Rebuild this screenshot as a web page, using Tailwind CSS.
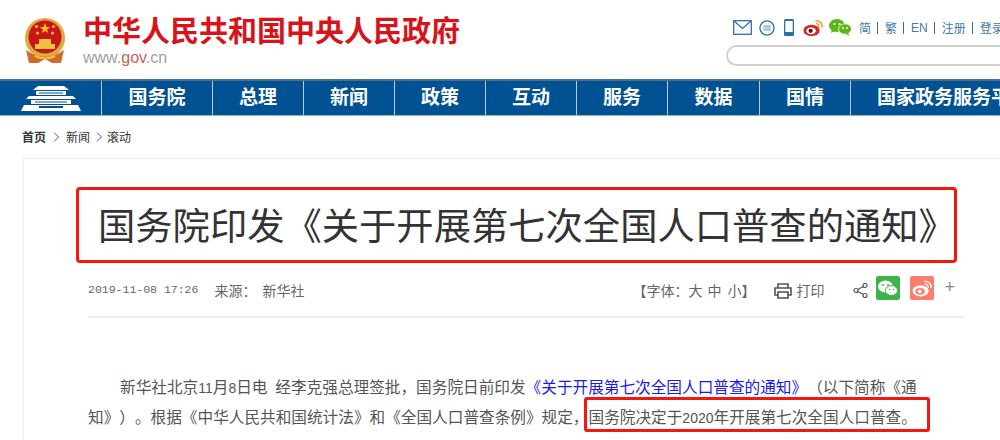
<!DOCTYPE html>
<html lang="zh-CN">
<head>
<meta charset="utf-8">
<script src="https://cdn.jsdelivr.net/npm/@tailwindcss/browser@4"></script>
</head>
<body class="w-[1000px] h-[440px] overflow-hidden bg-white font-['Noto_Sans_CJK_SC','Noto_Sans',sans-serif] [text-spacing-trim:space-all] [text-autospace:no-autospace]">
<header class="h-[79px] flex relative">
  <svg class="ml-[23px] mt-[18px] w-[44px] h-[47px] shrink-0" viewBox="0 0 44 47">
    <circle cx="22" cy="20" r="20" fill="#e0a83f"/>
    <circle cx="22" cy="19" r="16.500" fill="#c8161d"/>
    <polygon points="22,5 23.300,9 27.300,9 24,11.400 25.300,15 22,13 18.800,15 20,11.400 16.700,9 20.700,9" fill="#f5c518"/>
    <circle cx="13.500" cy="8.500" r="1.600" fill="#f5c518"/><circle cx="30.500" cy="8.500" r="1.600" fill="#f5c518"/>
    <circle cx="14.500" cy="15" r="1.600" fill="#f5c518"/><circle cx="29.500" cy="15" r="1.600" fill="#f5c518"/>
    <rect x="12" y="26" width="20" height="5" fill="#f0c040"/>
    <rect x="16" y="21" width="12" height="5" fill="#f0c040"/>
    <path d="M3 32 Q22 46 41 32 L38 45 H29 L22 41 L15 45 H6 Z" fill="#cf6a2a"/>
    <path d="M12 38 Q22 43 32 38" stroke="#f0c040" stroke-width="2" fill="none"/>
  </svg>
  <div class="ml-[16px] pt-[11px]">
    <div class="text-[29px] leading-[36px] font-bold text-[#d7141a] whitespace-nowrap">中华人民共和国中央人民政府</div>
    <div class="text-[16px] leading-[20px] mt-[1px] text-[#a0a0a0] font-['Liberation_Sans',sans-serif]">www.<span class="text-[#c9605a]">gov</span>.cn</div>
  </div>
  <div class="absolute left-[726px] top-0 w-[274px] overflow-hidden">
    <div class="flex items-center h-[45px] pt-[10px] whitespace-nowrap">
      <svg class="ml-[7px] w-[19px] h-[15px] shrink-0" viewBox="0 0 19 15" fill="none" stroke="#2b72a8" stroke-width="1.300"><rect x=".7" y=".7" width="17.600" height="13.600"/><path d="M1 1l8.500 7.500L18 1"/></svg>
      <svg class="ml-[7px] w-[16px] h-[16px] shrink-0" viewBox="0 0 17 17" fill="none" stroke="#2b72a8"><circle cx="8.500" cy="8.500" r="7.500" stroke-width="1.400"/><path d="M4.500 6.500h8M4.500 8.500h8M4.500 10.500h8" stroke="#7fa9c9" stroke-width="1.100"/></svg>
      <svg class="ml-[9px] w-[10px] h-[17px] shrink-0" viewBox="0 0 10 17"><rect width="10" height="17" rx="1.500" fill="#2b72a8"/><rect x="1.300" y="2" width="7.400" height="11" fill="#fff"/></svg>
      <svg class="ml-[9px] w-[20px] h-[18px] shrink-0" viewBox="0 0 21 18"><ellipse cx="9" cy="11.500" rx="8.500" ry="6" fill="#d9281e"/><ellipse cx="8.500" cy="12" rx="5" ry="3.600" fill="#fff"/><circle cx="8" cy="12" r="2.200" fill="#222"/><path d="M13 1.500a6 6 0 0 1 7 7" fill="none" stroke="#f0932b" stroke-width="1.500"/><path d="M13.500 4.500a3 3 0 0 1 3.500 3.500" fill="none" stroke="#f0932b" stroke-width="1.300"/></svg>
      <svg class="ml-[6px] w-[23px] h-[17px] shrink-0" viewBox="0 0 23 17"><ellipse cx="8" cy="6.500" rx="8" ry="6.500" fill="#5cb61a"/><path d="M3 10l-1 4 4-2z" fill="#5cb61a"/><circle cx="5.500" cy="5" r="1.100" fill="#fff"/><circle cx="10.500" cy="5" r="1.100" fill="#fff"/><ellipse cx="16" cy="10" rx="6.500" ry="5.200" fill="#5cb61a" stroke="#fff" stroke-width=".8"/><path d="M19 14l1.500 3-4-2z" fill="#5cb61a"/><circle cx="14" cy="9" r=".9" fill="#fff"/><circle cx="18" cy="9" r=".9" fill="#fff"/></svg>
      <div class="ml-[7px] flex items-center text-[12px] text-[#3d7aa8]">
        <span>简</span><span class="w-px h-[12px] bg-[#3d6f99] ml-[6px] mr-[7px]"></span><span>繁</span><span class="w-px h-[12px] bg-[#3d6f99] ml-[6px] mr-[7px]"></span><span class="font-['Liberation_Sans',sans-serif]">EN</span><span class="w-px h-[12px] bg-[#3d6f99] ml-[6px] mr-[7px]"></span><span>注册</span><span class="w-px h-[12px] bg-[#3d6f99] ml-[6px] mr-[7px]"></span><span>登录</span>
      </div>
    </div>
    <div class="h-[21px] w-[300px] border-2 border-[#d0d0d0] rounded-full bg-white"></div>
  </div>
</header>
<nav class="h-[37px] bg-[#005293] border-t-2 border-t-[#4a6f8f] border-b border-b-[#9fb2c4] flex text-white text-[19px] font-bold whitespace-nowrap">
  <div class="w-[102px] shrink-0 border-r border-[#b9c9d8] flex items-center justify-center">
    <svg class="w-[60px] h-[25px]" viewBox="0 0 60 25" fill="#fff"><path d="M17 0h26l5 4H12z"/><rect x="15" y="5" width="30" height="4"/><rect x="18" y="6.500" width="24" height="1" fill="#005293"/><path d="M8 10h44l3 3H5z"/><rect x="10" y="14" width="40" height="4"/><path d="M3 19h54l3 6H0z"/><rect x="14" y="15.500" width="32" height="1" fill="#005293"/><rect x="18" y="20" width="24" height="2" fill="#005293"/></svg>
  </div>
  <div class="w-[111px] shrink-0 border-r border-[#b9c9d8] flex items-center justify-center pb-[3px]">国务院</div>
  <div class="w-[91px] shrink-0 border-r border-[#b9c9d8] flex items-center justify-center pb-[3px]">总理</div>
  <div class="w-[91px] shrink-0 border-r border-[#b9c9d8] flex items-center justify-center pb-[3px]">新闻</div>
  <div class="w-[91px] shrink-0 border-r border-[#b9c9d8] flex items-center justify-center pb-[3px]">政策</div>
  <div class="w-[91px] shrink-0 border-r border-[#b9c9d8] flex items-center justify-center pb-[3px]">互动</div>
  <div class="w-[91px] shrink-0 border-r border-[#b9c9d8] flex items-center justify-center pb-[3px]">服务</div>
  <div class="w-[92px] shrink-0 border-r border-[#b9c9d8] flex items-center justify-center pb-[3px]">数据</div>
  <div class="w-[91px] shrink-0 border-r border-[#b9c9d8] flex items-center justify-center pb-[3px]">国情</div>
  <div class="pl-[26px] flex items-center pb-[3px]">国家政务服务平台</div>
</nav>
<div class="pl-[22px] h-[42px] pb-[1px] flex items-center text-[12px] text-[#333] leading-[18px]">
  <b>首页</b>
  <svg class="mx-[7px] w-[6px] h-[10px]" viewBox="0 0 6 10" fill="none" stroke="#555"><path d="M1 .5l4.500 4.500L1 9.500"/></svg>
  <span>新闻</span>
  <svg class="ml-[6px] mr-[5px] w-[6px] h-[10px]" viewBox="0 0 6 10" fill="none" stroke="#555"><path d="M1 .5l4.500 4.500L1 9.500"/></svg>
  <span>滚动</span>
</div>
<main class="relative ml-[23px] h-[282px] border-l border-t border-[#eee]">
  <div class="absolute left-[52px] top-[28px] w-[881px] h-[76px] border-[3px] border-[#f5160f] rounded-[4px] flex items-center pl-[19px] text-[37.300px] leading-none text-[#333] whitespace-nowrap">国务院印发《关于开展第七次全国人口普查的通知》</div>
  <div class="absolute left-[64px] top-[120px] w-[876px] h-[39px] flex items-start pt-[1px] pr-[9px] border-b-2 border-[#eee] text-[14px] leading-[20px] text-[#666] whitespace-nowrap">
    <span class="font-['Liberation_Mono',monospace] text-[11.500px]">2019-11-08 17:26</span>
    <span class="ml-[16px]">来源：</span><span class="ml-[6px]">新华社</span>
    <span class="ml-auto">【字体：</span><span>大</span><span class="ml-[5px]">中</span><span class="ml-[6px]">小</span><span>】</span>
    <svg class="ml-[19px] mt-[3px] w-[18px] h-[16px]" viewBox="0 0 18 16" fill="none" stroke="#555" stroke-width="1.600"><path d="M4 5V1h10v4M4 12H1V5h16v7h-3"/><rect x="4" y="9" width="10" height="6"/></svg>
    <span class="ml-[4px]">打印</span>
    <svg class="ml-[29px] mt-[3px] w-[15px] h-[15px]" viewBox="0 0 15 15" fill="none" stroke="#555" stroke-width="1.200"><circle cx="3" cy="7.500" r="2"/><circle cx="12" cy="2.500" r="2"/><circle cx="12" cy="12.500" r="2"/><path d="M5 6.500l5.200-3M5 8.500l5.200 3"/></svg>
    <span class="ml-[8px] -mt-[4px] w-[24px] h-[24px] rounded-[2px] bg-[#3cb44a] flex items-center justify-center"><svg class="w-[20px] h-[17px]" viewBox="0 0 20 17" fill="#fff"><ellipse cx="7.500" cy="6.500" rx="7.500" ry="6"/><ellipse cx="13.500" cy="10.500" rx="6" ry="5" stroke="#3cb44a"/><circle cx="5" cy="5" r="1" fill="#3cb44a"/><circle cx="10" cy="5" r="1" fill="#3cb44a"/><circle cx="11.500" cy="9.500" r=".8" fill="#3cb44a"/><circle cx="15.500" cy="9.500" r=".8" fill="#3cb44a"/></svg></span>
    <span class="ml-[10px] -mt-[4px] w-[24px] h-[24px] rounded-[2px] bg-[#fa7d6e] flex items-center justify-center"><svg class="w-[20px] h-[17px]" viewBox="0 0 21 18"><ellipse cx="9" cy="11.500" rx="8.500" ry="6" fill="#fff"/><ellipse cx="8.500" cy="12" rx="5" ry="3.600" fill="#fa7d6e"/><circle cx="8" cy="12" r="2" fill="#fff"/><path d="M13 1.500a6 6 0 0 1 7 7M13.500 4.500a3 3 0 0 1 3.500 3.500" fill="none" stroke="#fff" stroke-width="1.400"/></svg></span>
    <span class="ml-[10px] -mt-[2px] text-[18px] leading-[18px] text-[#888] font-['Liberation_Sans',sans-serif]">+</span>
  </div>
  <div class="absolute left-[64px] top-[213px] w-[840px] text-[15.650px] leading-[30px] text-[#555] indent-[32px]">新华社北京<span class="font-['Liberation_Sans',sans-serif] text-[14px] leading-none">11</span>月<span class="font-['Liberation_Sans',sans-serif] text-[14px] leading-none">8</span>日电<span class="font-['Liberation_Mono',monospace] text-[13px] leading-none"> </span>经李克强总理签批，国务院日前印发<span class="text-[#1a1aee]">《关于开展第七次全国人口普查的通知》</span>（以下简称《通知》）。根据《中华人民共和国统计法》和《全国人口普查条例》规定，国务院决定于<span class="font-['Liberation_Sans',sans-serif] text-[14px] leading-none">2020</span>年开展第七次全国人口普查。</div>
  <div class="absolute left-[560px] top-[238px] w-[346px] h-[35px] border-[3px] border-[#f5160f] rounded-[3px]"></div>
</main>
</body>
</html>
